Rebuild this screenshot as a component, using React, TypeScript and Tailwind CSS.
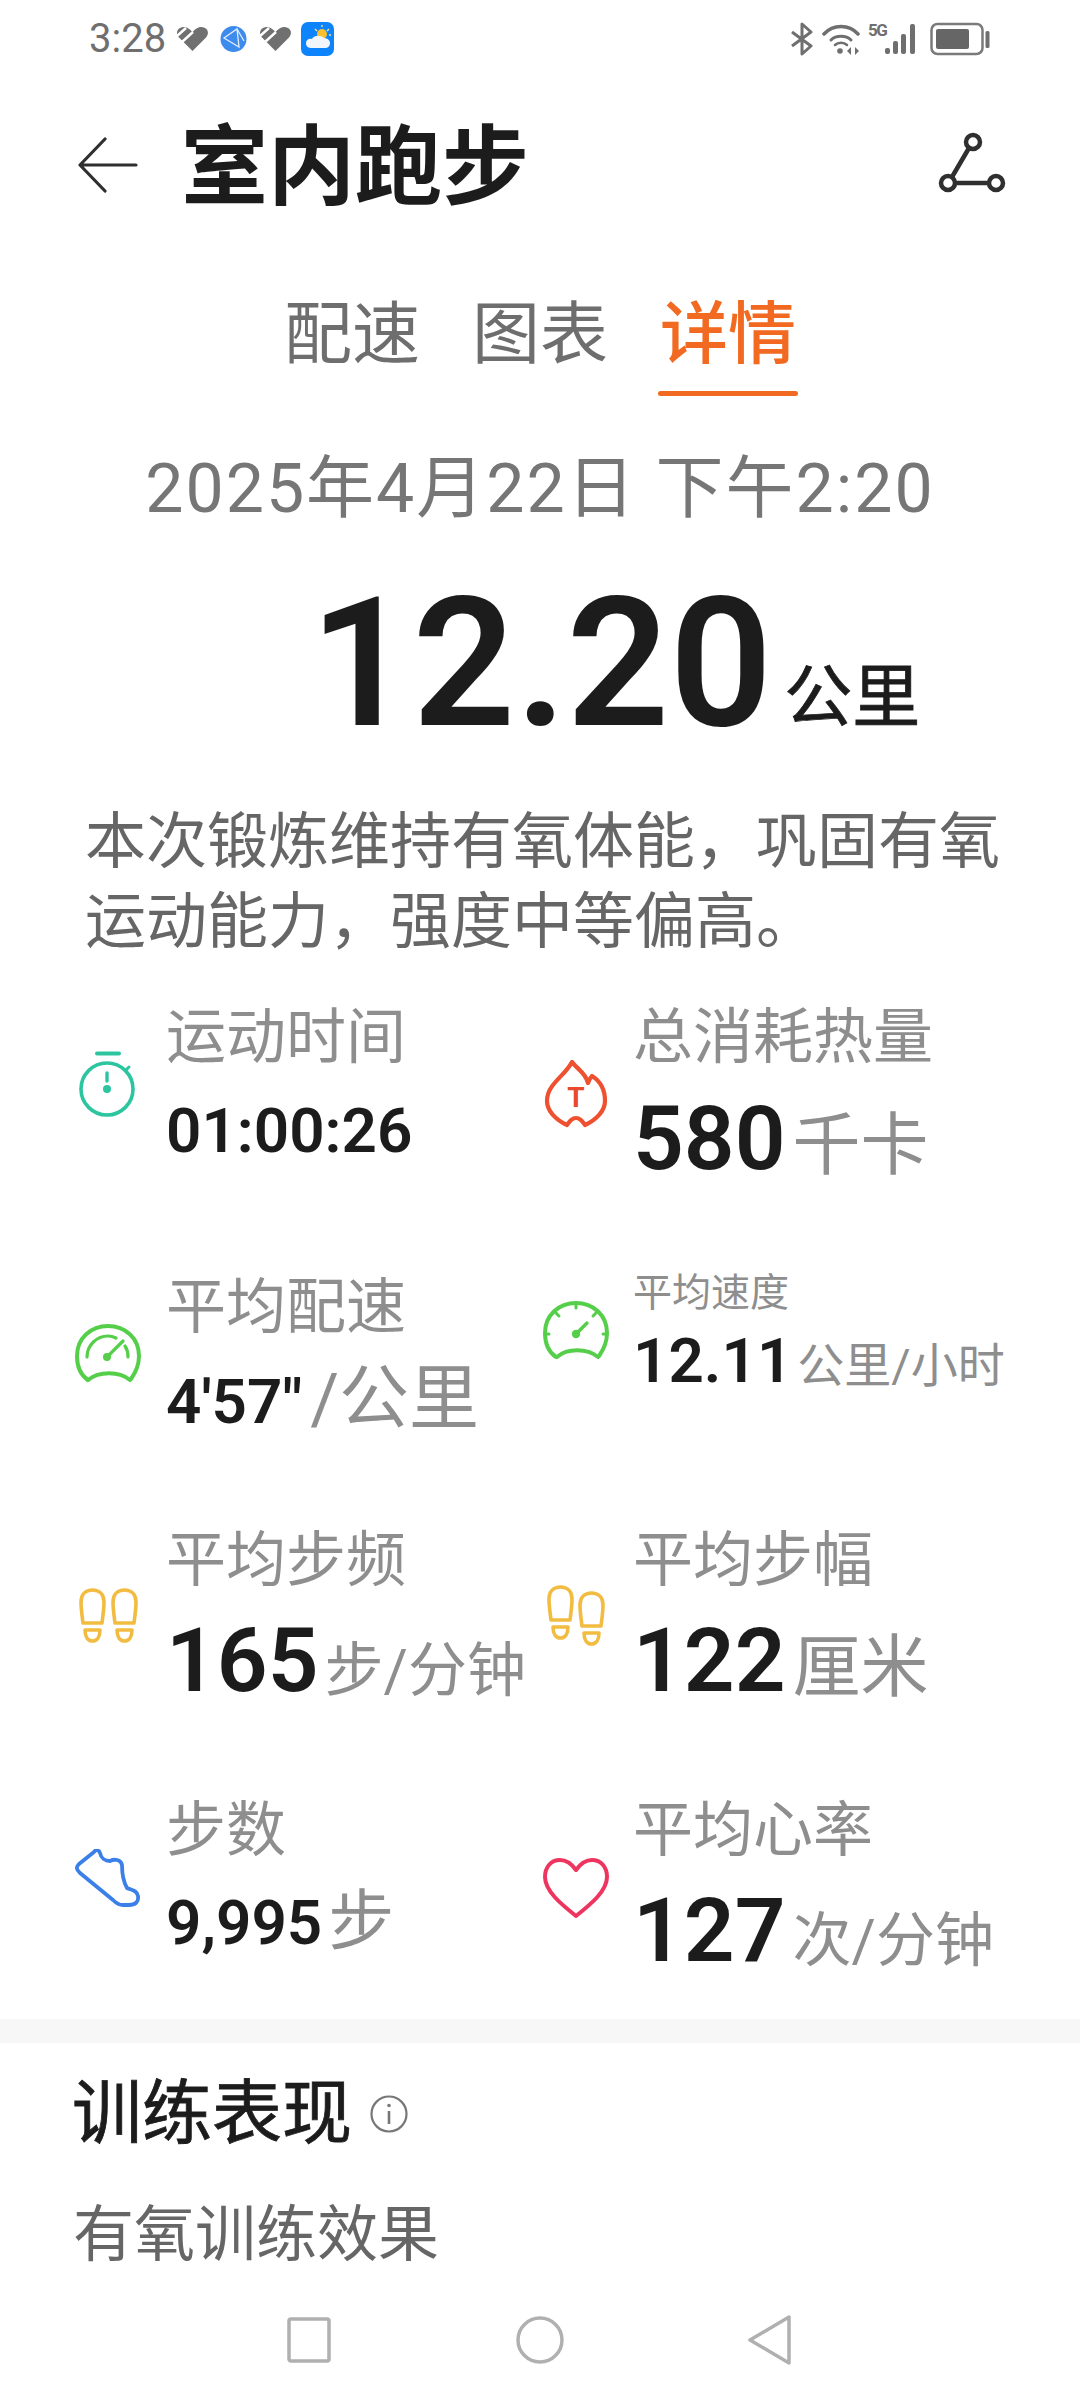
import React from "react";

const FONT = "font-['Roboto','Noto_Sans_CJK_SC',sans-serif]";

function HeartBadge() {
  return (
    <svg width="33" height="26" viewBox="0 0 33 26" fill="none">
      <path d="M16.5 25L3 11.5C0 8 0.5 4 4 2C8 0 12 1 16.5 6C21 1 25 0 29 2C32.5 4 33 8 30 11.5Z" fill="#707070" />
      <path d="M1 10L10 2M6 16L17 6" stroke="#fff" strokeWidth="2.4" />
    </svg>
  );
}

function Globe() {
  return (
    <svg width="27" height="26" viewBox="0 0 27 26" fill="none">
      <circle cx="13.5" cy="13" r="13" fill="#3d8bec" />
      <path d="M4 12L17 3L19 21L4 12Z M17 3L24 15" stroke="#fff" strokeWidth="1.3" opacity="0.85" />
    </svg>
  );
}

function Weather() {
  return (
    <svg width="33" height="34" viewBox="0 0 33 34" fill="none">
      <rect width="33" height="34" rx="7" fill="#0d84fb" />
      <circle cx="21" cy="12" r="5" fill="#fbc02d" />
      <path d="M21 3V5M28 7L26 9M14 7L16 9M30 13H28" stroke="#fde68a" strokeWidth="1.3" />
      <path d="M10 26C6 26 5 23 5 21C5 18 8 16 11 17C13 13 20 13 23 16C27 16 29 19 29 21C29 24 27 26 24 26Z" fill="#f1f6fc" />
    </svg>
  );
}

function StatusRight() {
  return (
    <div className="flex items-center">
      <svg width="24" height="34" viewBox="0 0 24 34" fill="none" stroke="#6f6f6f" strokeWidth="3">
        <path d="M2 10L21 24L12 32V2L21 10L2 24" strokeLinejoin="round" />
      </svg>
      <svg className="ml-[8px]" width="38" height="32" viewBox="0 0 38 32" fill="none" stroke="#6f6f6f" strokeLinecap="round">
        <path d="M2 11C11 1 27 1 36 11" strokeWidth="3.5" />
        <path d="M9 17C14 12 24 12 29 17" strokeWidth="3" />
        <path d="M13 22C16 19 22 19 25 22" strokeWidth="2.5" />
        <circle cx="18" cy="28" r="2.8" fill="#6f6f6f" stroke="none" />
        <path d="M29 24L25 28L29 32ZM33 24L37 28L33 32Z" fill="#6f6f6f" stroke="none" />
      </svg>
      <div className="relative ml-[8px] h-[32px] w-[50px]">
        <span className="absolute left-0 top-0 text-[17px] font-bold leading-[15px] tracking-[-1.5px] text-[#6f6f6f]">5G</span>
        <svg className="absolute left-[17px] top-0" width="33" height="32" viewBox="0 0 33 32" fill="#6f6f6f">
          <rect x="0" y="25" width="5" height="6" rx="2" />
          <rect x="8" y="18" width="5" height="13" rx="2" />
          <rect x="16" y="11" width="5" height="20" rx="2" />
          <rect x="25" y="1" width="5" height="30" rx="2" />
        </svg>
      </div>
      <svg className="ml-[12px]" width="60" height="34" viewBox="0 0 60 34" fill="none">
        <rect x="1.5" y="2" width="51" height="30" rx="6" stroke="#7a7a7a" strokeWidth="2.5" />
        <rect x="6" y="7" width="33" height="20" rx="2" fill="#666" />
        <rect x="55.5" y="9" width="4" height="17" rx="1.5" fill="#6f6f6f" />
      </svg>
    </div>
  );
}

function StatusBar() {
  return (
    <div className="flex h-[78px] items-center justify-between pl-[89px] pr-[90px]">
      <div className="flex items-center">
        <span className="text-[40px] leading-none text-[#6f6f6f]">3:28</span>
        <div className="ml-[10px]"><HeartBadge /></div>
        <div className="ml-[11px]"><Globe /></div>
        <div className="ml-[12px]"><HeartBadge /></div>
        <div className="ml-[9px]"><Weather /></div>
      </div>
      <StatusRight />
    </div>
  );
}

function Header() {
  return (
    <div className="flex h-[174px] items-center pl-[78px] pr-[74px]">
      <svg width="60" height="56" viewBox="0 0 60 56" fill="none" stroke="#2f2f2f" strokeWidth="3.2" strokeLinecap="round" strokeLinejoin="round">
        <path d="M58 28H2M27 2L2 28L27 54" />
      </svg>
      <h1 className="ml-[43px] mt-[6px] flex-1 text-[87px] font-bold leading-none text-[#1c1c1c]">室内跑步</h1>
      <svg width="68" height="66" viewBox="0 0 68 66" fill="none" stroke="#2f2f2f" strokeWidth="4.5">
        <circle cx="35" cy="10" r="7" />
        <circle cx="10" cy="51" r="7" />
        <circle cx="58" cy="51" r="7" />
        <path d="M31 16L14 45M17 51H51" />
      </svg>
    </div>
  );
}

function Tabs() {
  const tabs = ["配速", "图表", "详情"];
  return (
    <div className="flex justify-center gap-[52px] pt-[33px]">
      {tabs.map((t, i) => (
        <div key={t} className="flex w-[136px] flex-col items-center">
          <span className={i === 2 ? "whitespace-nowrap text-[68px] font-medium leading-[100px] text-[#f26a21]" : "whitespace-nowrap text-[68px] leading-[100px] text-[#6e6e6e]"}>{t}</span>
          <div className={i === 2 ? "mt-[6px] h-[5px] w-[140px] shrink-0 rounded-full bg-[#f26a21]" : "mt-[6px] h-[5px] w-[140px] shrink-0"} />
        </div>
      ))}
    </div>
  );
}

function Stopwatch() {
  return (
    <svg className="mt-[48px]" width="66" height="68" viewBox="0 0 66 68" fill="none" stroke="#2cc5a0" strokeLinecap="round">
      <path d="M22 2.5H44" strokeWidth="4" />
      <circle cx="32" cy="38" r="26" strokeWidth="3.6" />
      <path d="M51 19L54 16" strokeWidth="3" />
      <path d="M32 22V30" strokeWidth="3.4" />
      <circle cx="32" cy="38" r="4" fill="#2cc5a0" stroke="none" />
    </svg>
  );
}

function Flame() {
  return (
    <svg className="mt-[57px]" width="66" height="68" viewBox="0 0 66 68" fill="none">
      <path
        d="M29 2C33 8 43 13 45 23C46 20 47 18 49 16C57 21 62 30 62 41C62 51 53 60 42 65C39 61 37 58 33 58C29 58 27 61 24 65C13 60 4 51 4 41C4 24 22 16 29 2Z"
        stroke="#ef5030"
        strokeWidth="4.2"
        strokeLinejoin="round"
      />
      <text x="33" y="47" textAnchor="middle" fontSize="28" fontWeight="700" fill="#e8492c" fontFamily="Roboto, sans-serif">T</text>
    </svg>
  );
}

function GaugeLeft() {
  return (
    <svg className="mt-[51px]" width="66" height="60" viewBox="0 0 66 60" fill="none" stroke="#55cf4a" strokeWidth="4" strokeLinecap="round">
      <path d="M13 56C4 50 2 40 2 32C2 14 16 2 33 2C50 2 64 14 64 32C64 40 61 48 56 55" />
      <path d="M13 56C24 47 44 47 55 56" />
      <path d="M12 33C12 21 22 12 33 12C36 12 39 13 41 14" strokeWidth="3.2" />
      <path d="M50 22C52 25 53 29 53 33" strokeWidth="3.2" />
      <path d="M32 33L48 17" strokeWidth="3.2" />
      <circle cx="32" cy="33" r="4" fill="#55cf4a" stroke="none" />
    </svg>
  );
}

function GaugeRight() {
  return (
    <svg className="mt-[28px]" width="66" height="60" viewBox="0 0 66 60" fill="none" stroke="#55cf4a" strokeWidth="4" strokeLinecap="round">
      <path d="M13 56C4 50 2 40 2 32C2 14 16 2 33 2C50 2 64 14 64 32C64 40 61 48 56 55" />
      <path d="M14 56C24 47 44 47 55 56" />
      <path d="M33 3V7M13 12L16 15M53 12L50 15M2 33H6M60 33H64" strokeWidth="3" />
      <path d="M33 33L44 22" strokeWidth="3.4" />
      <circle cx="33" cy="33" r="4.2" fill="#55cf4a" stroke="none" />
    </svg>
  );
}

function Foot({ x, y }: { x: number; y: number }) {
  return (
    <g transform={`translate(${x} ${y})`}>
      <path d="M8 35C7 27 6 21 6 14C6 6 11 2 17.5 2C24 2 29 6 29 14C29 21 28 27 27 35Z" />
      <path d="M10 42H25C25 49 22 53 17.5 53C13 53 10 49 10 42Z" />
    </g>
  );
}

function FeetLeft() {
  return (
    <svg className="mt-[62px]" width="66" height="58" viewBox="0 0 66 58" fill="none" stroke="#f2bc42" strokeWidth="3.6" strokeLinejoin="round">
      <Foot x={0} y={0} />
      <Foot x={32} y={0} />
    </svg>
  );
}

function FeetRight() {
  return (
    <svg className="mt-[59px]" width="66" height="64" viewBox="0 0 66 64" fill="none" stroke="#f2bc42" strokeWidth="3.6" strokeLinejoin="round">
      <Foot x={0} y={0} />
      <Foot x={31} y={6} />
    </svg>
  );
}

function Shoe() {
  return (
    <svg className="mt-[53px]" width="66" height="58" viewBox="0 0 66 58" fill="none">
      <path
        d="M19 3C21 0 24 1 25 4C26 9 30 12 35 12C39 10 46 10 47 16C47 24 48 32 52 39C56 41 62 41 63 47C64 53 60 56 54 56H48C44 56 41 54 38 51L5 24C1 20 1 18 4 15Z"
        stroke="#3b7fe8"
        strokeWidth="3.8"
        strokeLinejoin="round"
      />
    </svg>
  );
}

function Heart() {
  return (
    <svg className="mt-[62px]" width="66" height="60" viewBox="0 0 66 60" fill="none">
      <path
        d="M33 12C28 5 22 2 17 2C8 2 2 9 2 19C2 33 18 46 33 58C48 46 64 33 64 19C64 9 58 2 49 2C44 2 38 5 33 12Z"
        stroke="#ee3560"
        strokeWidth="4"
        strokeLinejoin="round"
      />
    </svg>
  );
}

const label = "h-[70px] text-[60px] leading-[70px] text-[#8e8e8e]";
const labelSmall = "h-[40px] text-[39px] leading-[40px] text-[#8e8e8e]";
const numSmall = "text-[62px] font-semibold leading-[80px] text-[#1c1c1c]";
const numBig = "text-[89px] font-semibold leading-[80px] text-[#1c1c1c]";
const unit = "text-[#8e8e8e] leading-[80px]";

function Cell({ icon, right, children }: { icon: React.ReactNode; right?: boolean; children: React.ReactNode }) {
  return (
    <div className={right ? "flex items-start pl-[3px]" : "flex items-start pl-[75px]"}>
      <div className="w-[66px] shrink-0">{icon}</div>
      <div className={right ? "ml-[24px] whitespace-nowrap" : "ml-[25px] whitespace-nowrap"}>{children}</div>
    </div>
  );
}

function Metrics() {
  return (
    <div className="mt-[41px] grid grid-cols-2 grid-rows-[270px_253px_270px_223px]">
      <Cell icon={<Stopwatch />}>
        <div className={label}>运动时间</div>
        <div className="mt-[18px] flex h-[80px] items-baseline">
          <span className={numSmall}>01:00:26</span>
        </div>
      </Cell>
      <Cell right icon={<Flame />}>
        <div className={label}>总消耗热量</div>
        <div className="mt-[26px] flex h-[80px] items-baseline">
          <span className={numBig}>580</span>
          <span className={`ml-[7px] text-[68px] ${unit}`}>千卡</span>
        </div>
      </Cell>

      <Cell icon={<GaugeLeft />}>
        <div className={label}>平均配速</div>
        <div className="mt-[16px] flex h-[80px] items-baseline">
          <span className={numSmall}>4'57"</span>
          <span className={`ml-[8px] text-[70px] ${unit}`}>/公里</span>
        </div>
      </Cell>
      <Cell right icon={<GaugeRight />}>
        <div className={labelSmall}>平均速度</div>
        <div className="mt-[8px] flex h-[80px] items-baseline">
          <span className={numSmall}>12.11</span>
          <span className={`ml-[5px] text-[47px] ${unit}`}>公里/小时</span>
        </div>
      </Cell>

      <Cell icon={<FeetLeft />}>
        <div className={label}>平均步频</div>
        <div className="mt-[25px] flex h-[80px] items-baseline">
          <span className={numBig}>165</span>
          <span className={`ml-[6px] text-[59px] ${unit}`}>步/分钟</span>
        </div>
      </Cell>
      <Cell right icon={<FeetRight />}>
        <div className={label}>平均步幅</div>
        <div className="mt-[25px] flex h-[80px] items-baseline">
          <span className={numBig}>122</span>
          <span className={`ml-[7px] text-[68px] ${unit}`}>厘米</span>
        </div>
      </Cell>

      <Cell icon={<Shoe />}>
        <div className={label}>步数</div>
        <div className="mt-[16px] flex h-[80px] items-baseline">
          <span className={numSmall}>9,995</span>
          <span className={`ml-[6px] text-[66px] ${unit}`}>步</span>
        </div>
      </Cell>
      <Cell right icon={<Heart />}>
        <div className={label}>平均心率</div>
        <div className="mt-[25px] flex h-[80px] items-baseline">
          <span className={numBig}>127</span>
          <span className={`ml-[7px] text-[59px] ${unit}`}>次/分钟</span>
        </div>
      </Cell>
    </div>
  );
}

function NavBar() {
  return (
    <div className="mt-[40px] flex items-center pl-[287px]">
      <svg width="44" height="48" viewBox="0 0 44 48" fill="none" stroke="#b0b0b0" strokeWidth="3.5">
        <rect x="2" y="3" width="40" height="42" rx="2" />
      </svg>
      <svg className="ml-[185px]" width="48" height="48" viewBox="0 0 48 48" fill="none" stroke="#b0b0b0" strokeWidth="3.5">
        <circle cx="24" cy="24" r="22" />
      </svg>
      <svg className="ml-[184px]" width="44" height="50" viewBox="0 0 44 50" fill="none" stroke="#b0b0b0" strokeWidth="3.5" strokeLinejoin="round">
        <path d="M41 2V48L2 25Z" />
      </svg>
    </div>
  );
}

export default function App() {
  return (
    <div className={`${FONT} h-[2400px] w-[1080px] overflow-hidden bg-white`}>
      <StatusBar />
      <Header />
      <Tabs />
      <div className="mt-[53px] h-[80px] text-center text-[68px] leading-[80px] tracking-[2px] text-[#767676]">2025年4月22日 下午2:20</div>
      <div className="mt-[35px] flex h-[200px] items-baseline justify-center pl-[150px]">
        <span className="text-[180px] font-semibold leading-[200px] text-[#1c1c1c]">12.20</span>
        <span className="ml-[12px] -translate-y-[4px] text-[68px] leading-[200px] text-[#1c1c1c] [-webkit-text-stroke:0.8px_#1c1c1c]">公里</span>
      </div>
      <p className="mt-[38px] pl-[85px] pr-[70px] text-[61px] leading-[80px] text-[#666]">本次锻炼维持有氧体能，巩固有氧运动能力，强度中等偏高。</p>
      <Metrics />
      <div className="h-[24px] bg-[#f7f7f7]" />
      <div className="mt-[31px] flex h-[80px] items-center pl-[72px]">
        <span className="text-[70px] leading-[80px] text-[#1c1c1c] [-webkit-text-stroke:0.8px_#1c1c1c]">训练表现</span>
        <svg className="ml-[18px]" width="38" height="38" viewBox="0 0 38 38" fill="none" stroke="#777">
          <circle cx="19" cy="19" r="17.5" strokeWidth="2.2" />
          <path d="M19 16V29" strokeWidth="2.6" />
          <circle cx="19" cy="10.5" r="1.8" fill="#777" stroke="none" />
        </svg>
      </div>
      <div className="mt-[41px] h-[80px] pl-[73px] text-[61px] leading-[80px] text-[#666]">有氧训练效果</div>
      <NavBar />
    </div>
  );
}
